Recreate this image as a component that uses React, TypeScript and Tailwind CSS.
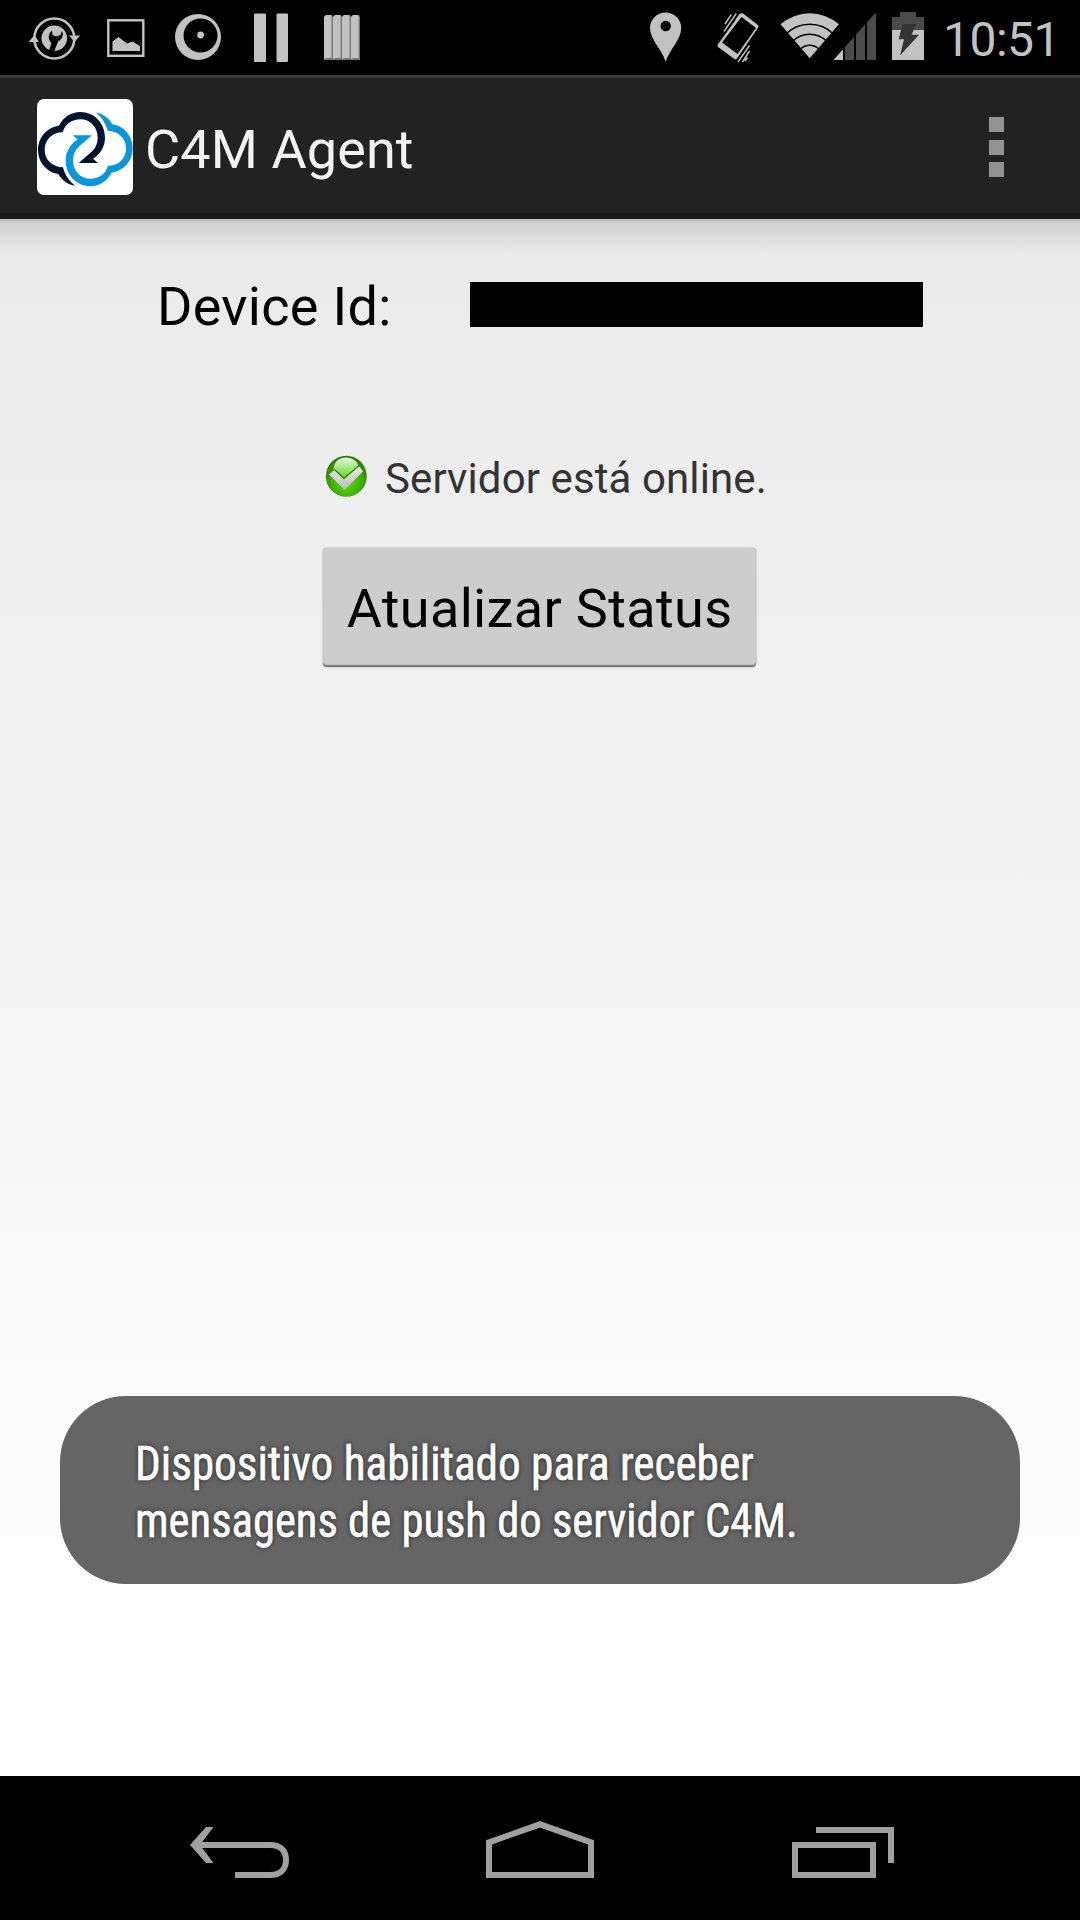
import type { ReactNode } from "react";

const StatusIcon = ({ width, className, children }: { width: number; className: string; children: ReactNode }) => (
  <svg viewBox={`0 0 ${width} 75`} className={`h-[75px] shrink-0 ${className}`} fill="#c2c2c2">
    {children}
  </svg>
);

const StatusBar = () => (
  <header className="flex h-[75px] items-center justify-between bg-black">
    <div className="flex pl-7">
      {/* Sync service */}
      <StatusIcon width={53} className="w-[53px]">
        <circle cx="26.3" cy="38.5" r="20" fill="none" stroke="#c2c2c2" strokeWidth="2.6" />
        <circle cx="26.3" cy="38.3" r="12.8" />
        <path d="M.5 42H11L6.6 35ZM41 35.5h11L46.5 42Z" />
        <path d="M20.5 52 23.5 43C19.5 39 20 34 24 30.5L24.5 35 28 36.5 32.5 35 34 31C36 35 34 39.5 30 41.5L26 52Z" fill="#000" />
      </StatusIcon>
      {/* Screenshot saved */}
      <StatusIcon width={38} className="ml-[26px] w-[38px]">
        <rect x="1.3" y="20.3" width="35" height="35.5" fill="none" stroke="#c2c2c2" strokeWidth="2.4" />
        <path d="M5.5 51V41.5L11.5 37 20 43.5 25.5 41.5 33 46V51Z" />
      </StatusIcon>
      {/* Ring */}
      <StatusIcon width={46} className="ml-[30px] w-[46px]">
        <circle cx="23" cy="37" r="23" />
        <circle cx="25.5" cy="35.5" r="17" fill="#000" />
        <circle cx="25.6" cy="35" r="3.4" />
      </StatusIcon>
      {/* Pause */}
      <StatusIcon width={34} className="ml-[33px] w-[34px]">
        <rect x="0" y="13.5" width="12" height="48.5" rx="1" />
        <rect x="22.5" y="13.5" width="11.5" height="48.5" rx="1" />
      </StatusIcon>
      {/* Barcode */}
      <StatusIcon width={36} className="ml-9 w-9">
        {[0, 9, 18, 27].map((x) => (
          <g key={x}>
            <path d={`M${x} 60V17l2-2h6l1 2V60Z`} fill="#777" />
            <path d={`M${x} 59V17l2-2h5l.6 1V58H${x + 2}Z`} />
          </g>
        ))}
      </StatusIcon>
    </div>
    <div className="flex">
      {/* Location */}
      <StatusIcon width={32} className="w-8">
        <path d="M15.7 62C12 49 0 40 0 28a15.6 15.6 0 0 1 31.2 0C31.2 40 19.4 49 15.7 62Z" />
        <circle cx="15.7" cy="26" r="5.2" fill="#000" />
      </StatusIcon>
      {/* Vibrate */}
      <StatusIcon width={42} className="ml-[35px] w-[42px]">
        <path
          fillRule="evenodd"
          d="M24 13.3Q25 12.8 26 13.5L41 25Q42 26 41.2 27.5L20 58.5Q19 60 17.5 59L1 47Q0 46 .8 44.5L22.5 14.5ZM24.5 17 39 28 20.5 54 5 42.5Z"
        />
        <path d="M14.3 14.5 8 24M19.3 13.5 7 31.5M23.5 14 19 20M32.5 45.5 21 62M32.5 51 25.5 62M30.5 57.5 28 61" stroke="#c2c2c2" strokeWidth="1.4" />
      </StatusIcon>
      {/* Wi-Fi */}
      <StatusIcon width={60} className="ml-[21px] w-[60px]">
        <path d="M29.7 58.3.5 24.3A44.5 44.5 0 0 1 59 24.3Z" />
        <g fill="none" stroke="#000" strokeWidth="1.4">
          <circle cx="29.7" cy="58.3" r="34" />
          <circle cx="29.7" cy="58.3" r="24" />
          <circle cx="29.7" cy="58.3" r="13" />
        </g>
      </StatusIcon>
      {/* Cell signal */}
      <StatusIcon width={43} className="-ml-[7px] w-[43px]">
        <path d="M.5 60 10 49.3V60Z" />
        <path d="M12 47 21 37V60H12ZM23 34.5 32 24.5V60H23ZM34 22.3 43 12.3V60H34Z" fill="#4b4b4b" />
      </StatusIcon>
      {/* Battery */}
      <StatusIcon width={32} className="ml-4 w-8">
        <path d="M0 30V17H8V12H24V17H32V30Z" fill="#4b4b4b" />
        <path d="M0 30H32V60H0Z" />
        <path d="M10.5 24H24L19.7 34.7H27L8 55.5 12 39.3H6.7Z" fill="#333" />
      </StatusIcon>
      <span className="mr-[20px] ml-[19px] w-[117px] pt-1 text-[48px] leading-[71px] tracking-[-0.5px] whitespace-nowrap text-[#c2c2c2]">10:51</span>
    </div>
  </header>
);

// one half of the logo, the other is the same shape turned upside down
const cloudHalf =
  "M123 269C101 266 84 253 73 234C37 229 12 197 12 162C12 125 38 94 75 89C88 63 112 48 139 48C181 48 213 82 213 125C213 152 199 174 177 188L192 201H134L166 173C182 162 191 144 191 125C191 93 168 70 139 70C113 70 93 85 86 109C54 109 32 132 32 162C32 191 55 213 87 214C92 235 105 255 123 269Z";

const AppLogo = () => (
  <svg viewBox="9 9 288 288" className="size-24 rounded-[7px] bg-white">
    <path d={cloudHalf} fill="#06132e" />
    <path d={cloudHalf} fill="#0896dd" transform="rotate(180 154 159.3)" />
  </svg>
);

const ActionBar = () => (
  <div className="flex h-36 items-center border-t-[3px] border-[#3a3a3a] bg-[#222] pb-[3px] pl-[37px] shadow-[inset_0_-6px_0_#1b1b1b]">
    <AppLogo />
    <h1 className="ml-3 pt-[5px] text-[54px] leading-[64px] tracking-[0.1px] text-[#f3f3f3]">C4M Agent</h1>
    <button className="mr-[76px] ml-auto flex flex-col gap-[7.5px]" aria-label="Menu">
      <span className="size-[15px] bg-[#929292]" />
      <span className="size-[15px] bg-[#929292]" />
      <span className="size-[15px] bg-[#929292]" />
    </button>
  </div>
);

const OnlineIcon = () => (
  <svg viewBox="0 0 42 42" className="-mt-0.5 size-[42px]">
    <defs>
      <radialGradient id="ball" cx="50%" cy="65%" r="60%">
        <stop offset="0" stopColor="#5fe20c" />
        <stop offset=".6" stopColor="#3eae08" />
        <stop offset="1" stopColor="#2c7d08" />
      </radialGradient>
      <linearGradient id="gloss" x1="0" y1="0" x2="0" y2="1">
        <stop offset="0" stopColor="#e6fbdc" />
        <stop offset="1" stopColor="#5fd622" />
      </linearGradient>
      <linearGradient id="check" x1="0" y1="0" x2="0" y2="1">
        <stop offset="0" stopColor="#eaeaea" />
        <stop offset="1" stopColor="#b9bdb5" />
      </linearGradient>
    </defs>
    <circle cx="21.3" cy="21.3" r="20.5" fill="url(#ball)" />
    <path d="M8.5 14C9 6 15 2.5 21 2.5S33 6 34 13L19 23Z" fill="url(#gloss)" />
    <path d="M4 19.5 9.5 15 19 24 34 11 38 16.5 19.5 35Z" fill="url(#check)" />
    <path d="M9.5 14.5 19 23.5 34 10.5" fill="none" stroke="#287c0b" strokeWidth="1.2" />
  </svg>
);

const Toast = ({ children }: { children: ReactNode }) => (
  <div className="absolute top-[1396px] left-[60px] h-[188px] w-[960px] rounded-[66px] bg-[#656565] pt-10 pl-[75px] text-[48px] leading-[56.5px] whitespace-nowrap text-white [font-stretch:75%] [text-shadow:0_0_6px_#222] [-webkit-text-stroke:0.6px_white]">
    {children}
  </div>
);

const NavigationBar = () => (
  <nav className="flex h-36 bg-black pt-[49px] pl-[190px]">
    <svg viewBox="0 0 100 60" className="h-[60px] w-[100px]" fill="none" stroke="#a0a0a0" strokeWidth="6">
      <path d="M8 20H80C91 20 96 26 96 35S91 50 80 50H45" />
      <path d="M16 2H23.5L10 20 23.5 38H16L0 20Z" fill="#a0a0a0" stroke="none" />
    </svg>
    <svg viewBox="0 0 108 60" className="ml-[196px] h-[60px] w-[108px] overflow-visible" fill="none" stroke="#a0a0a0" strokeWidth="6">
      <path d="M3 50V17.3L54-.7 105 17.3V50Z" />
    </svg>
    <svg viewBox="0 0 102 60" className="ml-[198px] h-[60px] w-[102px]" fill="none" stroke="#a0a0a0" strokeWidth="6">
      <path d="M3 20H81V50H3ZM24 5H99V38" />
    </svg>
  </nav>
);

const App = () => (
  <div className="relative flex h-[1920px] w-[1080px] flex-col overflow-hidden font-['Roboto',sans-serif]">
    <StatusBar />
    <ActionBar />
    <main className="flex-1 bg-linear-to-b from-[#eaeaea] to-white to-95%">
      <div className="h-9 border-t-[3px] border-[#c3c3c3] bg-linear-to-b from-black/11 to-transparent" />
      <div className="flex items-center pt-5 pl-[157px]">
        <span className="w-[313px] text-[54px] leading-[64px] tracking-[0.3px] text-black">Device Id:</span>
        <span className="-mt-1.5 h-[45px] w-[453px] bg-black" />
      </div>
      <div className="mt-28 flex items-center pl-[325px]">
        <OnlineIcon />
        <span className="ml-[18px] pt-1 text-[42px] leading-[48px] tracking-[0.1px] whitespace-nowrap text-[#333]">Servidor está online.</span>
      </div>
      <button className="mt-[45px] ml-[323px] flex h-[119px] w-[433px] items-center justify-center rounded-[4px] bg-[#cdcdcd] pt-0.5 text-[54px] tracking-[0.35px] whitespace-nowrap text-black shadow-[inset_0_-2px_1px_#777,0_0_2px_#999]">
        Atualizar Status
      </button>
    </main>
    <NavigationBar />
    <Toast>
      <p className="origin-left scale-x-[0.942]">Dispositivo habilitado para receber</p>
      <p className="origin-left scale-x-[0.93]">mensagens de push do servidor C4M.</p>
    </Toast>
  </div>
);

export default App;
